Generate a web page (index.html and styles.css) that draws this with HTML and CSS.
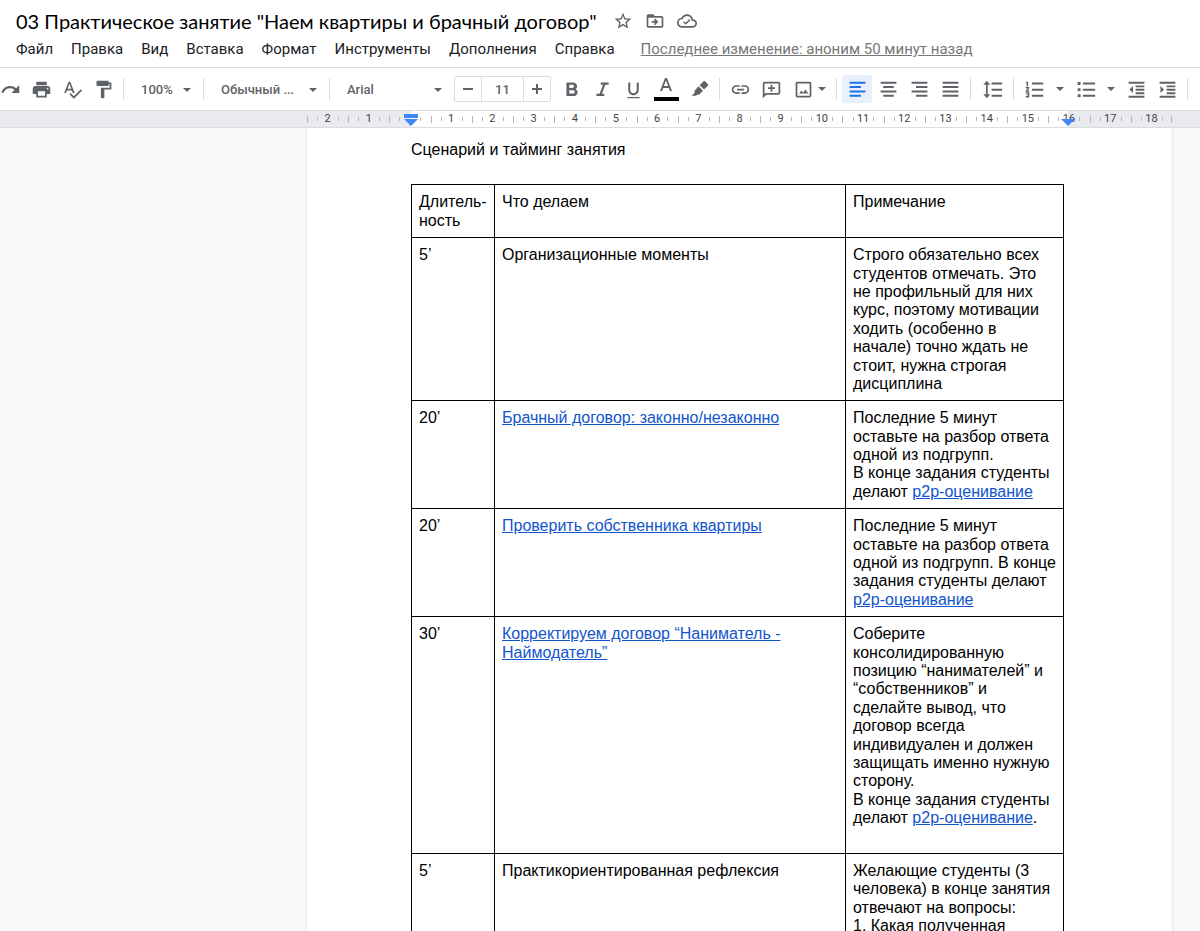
FILE: index.html
```html
<!DOCTYPE html>
<html lang="ru">
<head>
<meta charset="utf-8">
<meta name="viewport" content="width=device-width, initial-scale=1">
<title>03 Практическое занятие "Наем квартиры и брачный договор"</title>
<link rel="stylesheet" href="styles.css">
</head>
<body>
<header class="header">
  <div class="title-row">
    <h1 class="doc-title">03 Практическое занятие "Наем квартиры и брачный договор"</h1>
    <button class="title-btn" type="button" aria-label="Пометить"><svg class="icon-sm" viewBox="0 0 24 24"><path d="M22 9.24l-7.19-.62L12 2 9.19 8.63 2 9.24l5.46 4.73L5.82 21 12 17.27 18.18 21l-1.63-7.03L22 9.24zM12 15.4l-3.76 2.27 1-4.28-3.32-2.88 4.38-.38L12 6.1l1.71 4.04 4.38.38-3.32 2.88 1 4.28L12 15.4z"/></svg></button>
    <button class="title-btn" type="button" aria-label="Переместить"><svg class="icon-sm" viewBox="0 0 24 24"><path d="M20 6h-8l-2-2H4c-1.100 0-2 .9-2 2v12c0 1.100.9 2 2 2h16c1.100 0 2-.9 2-2V8c0-1.100-.9-2-2-2zm0 12H4V8h16v10z"/><path d="M8 12h4.200l-1.600-1.600L12 9l4 4-4 4-1.400-1.400 1.600-1.600H8z"/></svg></button>
    <button class="title-btn" type="button" aria-label="Статус документа"><svg class="icon-sm" viewBox="0 0 24 24"><path d="M19.350 10.040C18.670 6.590 15.640 4 12 4 9.110 4 6.600 5.640 5.350 8.040 2.340 8.360 0 10.910 0 14c0 3.310 2.690 6 6 6h13c2.760 0 5-2.240 5-5 0-2.640-2.050-4.780-4.650-4.960zM19 18H6c-2.210 0-4-1.790-4-4 0-2.050 1.530-3.760 3.560-3.970l1.070-.11.5-.95C8.080 7.140 9.940 6 12 6c2.620 0 4.880 1.860 5.390 4.430l.3 1.500 1.530.11c1.560.1 2.780 1.410 2.780 2.960 0 1.650-1.350 3-3 3z"/><path d="M10.500 16.600l-3.100-3.100 1.300-1.300 1.800 1.800 4.300-4.300 1.300 1.300z"/></svg></button>
  </div>
  <nav class="menu">
    <button class="menu-item" type="button">Файл</button>
    <button class="menu-item" type="button">Правка</button>
    <button class="menu-item" type="button">Вид</button>
    <button class="menu-item" type="button">Вставка</button>
    <button class="menu-item" type="button">Формат</button>
    <button class="menu-item" type="button">Инструменты</button>
    <button class="menu-item" type="button">Дополнения</button>
    <button class="menu-item" type="button">Справка</button>
    <a class="last-edit" href="#history">Последнее изменение: аноним 50 минут назад</a>
  </nav>
</header>

<div class="toolbar" role="toolbar" aria-label="Форматирование">
  <button class="tool" type="button" aria-label="Повторить"><svg class="icon" viewBox="0 0 24 24"><path d="M18.400 10.600C16.550 8.990 14.150 8 11.500 8c-4.650 0-8.580 3.030-9.960 7.220L3.900 16c1.050-3.190 4.050-5.500 7.600-5.500 1.950 0 3.730.72 5.120 1.880L13 16h9V7l-3.600 3.600z"/></svg></button>
  <button class="tool" type="button" aria-label="Печать"><svg class="icon" viewBox="0 0 24 24"><path d="M19 8H5c-1.660 0-3 1.340-3 3v6h4v4h12v-4h4v-6c0-1.660-1.340-3-3-3zm-3 11H8v-5h8v5zm3-7c-.55 0-1-.45-1-1s.45-1 1-1 1 .45 1 1-.45 1-1 1zm-1-9H6v4h12V3z"/></svg></button>
  <button class="tool" type="button" aria-label="Правописание"><svg class="icon" viewBox="0 0 24 24"><path d="M12.450 16h2.090L9.430 3H7.570L2.460 16h2.090l1.120-3h5.640l1.140 3zm-6.020-5L8.500 5.480 10.570 11H6.430zm15.160.59l-8.090 8.090L9.830 16l-1.410 1.410 5.090 5.090L23 13l-1.410-1.410z"/></svg></button>
  <button class="tool" type="button" aria-label="Копировать форматирование"><svg class="icon" viewBox="0 0 24 24"><path d="M18 4V3c0-.55-.45-1-1-1H5c-.55 0-1 .45-1 1v4c0 .55.45 1 1 1h12c.55 0 1-.45 1-1V6h1v4H9v11c0 .55.45 1 1 1h2c.55 0 1-.45 1-1v-9h8V4h-3z"/></svg></button>
  <span class="sep"></span>
  <span class="picker picker-zoom"><select class="picker-select" aria-label="Масштаб"><option>100%</option></select></span>
  <span class="sep"></span>
  <span class="picker picker-style"><select class="picker-select" aria-label="Стили"><option>Обычный ...</option></select></span>
  <span class="sep"></span>
  <span class="picker picker-font"><select class="picker-select" aria-label="Шрифт"><option>Arial</option></select></span>
  <span class="size-box">
    <button class="size-btn" type="button" aria-label="Уменьшить"><svg class="icon-xs" viewBox="0 0 12 12"><path d="M1 5h10v2H1z"/></svg></button>
    <input class="size-input" type="text" value="11" aria-label="Размер шрифта">
    <button class="size-btn" type="button" aria-label="Увеличить"><svg class="icon-xs" viewBox="0 0 12 12"><path d="M5 1h2v4h4v2H7v4H5V7H1V5h4z"/></svg></button>
  </span>
  <button class="tool" type="button" aria-label="Полужирный"><svg class="icon" viewBox="0 0 24 24"><path d="M16.500 11.700c1.100-.8 1.900-2 1.900-3.200C18.400 5.700 16.300 4 13.500 4H6.200v15.500h8.100c2.700 0 4.700-2 4.700-4.500 0-1.500-1-2.700-2.500-3.300zM9.500 6.700h3.600c1 0 1.800.8 1.800 1.700s-.8 1.800-1.800 1.800H9.500zm4.300 10H9.500v-3.800h4.300c1 0 1.800.9 1.800 1.900s-.8 1.900-1.800 1.900z"/></svg></button>
  <button class="tool" type="button" aria-label="Курсив"><svg class="icon" viewBox="0 0 24 24"><path d="M10 4v2.600h2.600l-4 10.300H5v2.600h9v-2.600h-2.700l4-10.300H19V4z"/></svg></button>
  <button class="tool" type="button" aria-label="Подчеркнутый"><svg class="icon" viewBox="0 0 24 24"><path d="M12 18.500c3.310 0 6-2.690 6-6V4h-2.300v8.500c0 2.100-1.600 3.700-3.700 3.700s-3.700-1.600-3.700-3.700V4H6v8.500c0 3.310 2.690 6 6 6zM5 20.500V22h14v-1.500z"/></svg></button>
  <button class="tool tool-color" type="button" aria-label="Цвет текста"><svg class="icon-color" viewBox="0 0 26 26"><path d="M12 2L7 15h2.100l1.100-3h5.600l1.100 3H19L14 2zm-1.100 8.100L13 4.500l2.100 5.600z"/><path class="swatch" d="M1 21h25v4H1z"/></svg></button>
  <button class="tool" type="button" aria-label="Цвет выделения"><svg class="icon" viewBox="0 0 24 24"><path d="M16.600 2.700c.5-.5 1.300-.5 1.800 0l3.200 3.200c.5.5.5 1.300 0 1.800l-4.400 4.400-5-5zM11 8.300l5 5-4 4c-.7.7-1.700.9-2.600.5L8 19.200H3l3.500-3.500c-.5-1-.3-2 .4-2.800z"/></svg></button>
  <span class="sep"></span>
  <button class="tool" type="button" aria-label="Ссылка"><svg class="icon" viewBox="0 0 24 24"><path d="M3.900 12c0-1.710 1.390-3.100 3.100-3.100h4V7H7c-2.760 0-5 2.240-5 5s2.240 5 5 5h4v-1.900H7c-1.710 0-3.100-1.390-3.100-3.100zM8 13h8v-2H8v2zm9-6h-4v1.900h4c1.710 0 3.100 1.390 3.100 3.100s-1.390 3.100-3.100 3.100h-4V17h4c2.760 0 5-2.240 5-5s-2.240-5-5-5z"/></svg></button>
  <button class="tool" type="button" aria-label="Комментарий"><svg class="icon" viewBox="0 0 24 24"><path d="M20 3H4c-1.100 0-2 .9-2 2v17l4-4h14c1.100 0 2-.9 2-2V5c0-1.100-.9-2-2-2zm0 13H5.200L4 17.200V5h16z"/><path d="M11 6.500h2v3h3v2h-3v3h-2v-3H8v-2h3z"/></svg></button>
  <button class="tool tool-image" type="button" aria-label="Изображение"><svg class="icon" viewBox="0 0 24 24"><path d="M19 5v14H5V5h14m0-2H5c-1.100 0-2 .9-2 2v14c0 1.100.9 2 2 2h14c1.100 0 2-.9 2-2V5c0-1.100-.9-2-2-2z"/><path d="M14.200 12l-2.700 3.600-2-2.400L7 16.500h10.500z"/></svg><span class="caret"></span></button>
  <span class="sep"></span>
  <button class="tool tool-active" type="button" aria-label="По левому краю" aria-pressed="true"><svg class="icon" viewBox="0 0 24 24"><path d="M3 3h18v2.300H3zM3 8h13v2.300H3zM3 13h18v2.300H3zM3 18h13v2.300H3z"/></svg></button>
  <button class="tool" type="button" aria-label="По центру"><svg class="icon" viewBox="0 0 24 24"><path d="M3 3h18v2.300H3zM6 8h12v2.300H6zM3 13h18v2.300H3zM6 18h12v2.300H6z"/></svg></button>
  <button class="tool" type="button" aria-label="По правому краю"><svg class="icon" viewBox="0 0 24 24"><path d="M3 3h18v2.300H3zM8 8h13v2.300H8zM3 13h18v2.300H3zM8 18h13v2.300H8z"/></svg></button>
  <button class="tool" type="button" aria-label="По ширине"><svg class="icon" viewBox="0 0 24 24"><path d="M3 3h18v2.300H3zM3 8h18v2.300H3zM3 13h18v2.300H3zM3 18h18v2.300H3z"/></svg></button>
  <span class="sep"></span>
  <button class="tool tool-wide" type="button" aria-label="Интервал"><svg class="icon" viewBox="0 0 24 24"><path d="M5.500 2L1.500 6.500h3v11h-3l4 4.500 4-4.500h-3v-11h3zM11 4h12v2.300H11zM11 11h12v2.300H11zM11 18h12v2.300H11z"/></svg></button>
  <span class="sep"></span>
  <button class="tool" type="button" aria-label="Нумерованный список"><svg class="icon" viewBox="0 0 24 24"><path d="M2 16.500h2.400v.8H3v1.400h1.400v.8H2V21h4v-6H2zM3 8.500h1.600V3H2v1.400h1zM2 10.500h2.300L2 13.200v1.300h4V13H4.200L6 10.800V9H2zM9 4v2.300h13V4zM9 18v2.300h13V18zM9 11v2.300h13V11z"/></svg></button>
  <button class="tool tool-narrow" type="button" aria-label="Варианты нумерации"><span class="caret"></span></button>
  <button class="tool" type="button" aria-label="Маркированный список"><svg class="icon" viewBox="0 0 24 24"><path d="M3 3.500h3.300v3.300H3zM3 10.500h3.300v3.300H3zM3 17.500h3.300v3.300H3zM9 4h14v2.300H9zM9 11h14v2.300H9zM9 18h14v2.300H9z"/></svg></button>
  <button class="tool tool-narrow" type="button" aria-label="Варианты маркеров"><span class="caret"></span></button>
  <button class="tool" type="button" aria-label="Уменьшить отступ"><svg class="icon" viewBox="0 0 24 24"><path d="M3 3h18v2.300H3zM11 7.300h10v2.200H11zM11 11.200h10v2.200H11zM11 15.200h10v2.200H11zM3 19h18v2.300H3zM8 8v8l-4-4z"/></svg></button>
  <button class="tool" type="button" aria-label="Увеличить отступ"><svg class="icon" viewBox="0 0 24 24"><path d="M3 3h18v2.300H3zM11 7.300h10v2.200H11zM11 11.200h10v2.200H11zM11 15.200h10v2.200H11zM3 19h18v2.300H3zM4 8v8l4-4z"/></svg></button>
  <span class="sep"></span>
</div>

<div class="ruler">
  <div class="ruler-track">
    <span class="cm">2</span><span class="cm">1</span><span class="cm"></span><span class="cm">1</span><span class="cm">2</span><span class="cm">3</span><span class="cm">4</span><span class="cm">5</span><span class="cm">6</span><span class="cm">7</span><span class="cm">8</span><span class="cm">9</span><span class="cm">10</span><span class="cm">11</span><span class="cm">12</span><span class="cm">13</span><span class="cm">14</span><span class="cm">15</span><span class="cm">16</span><span class="cm">17</span><span class="cm">18</span>
    <svg class="marker marker-left" viewBox="0 0 14 12"><path d="M0 0h14v4H0zM0 5h14l-7 7z"/></svg>
    <svg class="marker marker-right" viewBox="0 0 14 12"><path d="M0 5h14l-7 7z"/></svg>
  </div>
</div>

<main class="workspace">
  <article class="page">
    <p class="lead">Сценарий и тайминг занятия</p>
    <table class="plan">
      <colgroup><col class="col-time"><col class="col-what"><col class="col-note"></colgroup>
      <thead>
        <tr><th scope="col">Длитель-<br>ность</th><th scope="col">Что делаем</th><th scope="col">Примечание</th></tr>
      </thead>
      <tbody>
        <tr><td>5’</td><td>Организационные моменты</td><td>Строго обязательно всех студентов отмечать. Это не профильный для них курс, поэтому мотивации ходить (особенно в начале) точно ждать не стоит, нужна строгая дисциплина</td></tr>
        <tr><td>20’</td><td><a href="#contract">Брачный договор: законно/незаконно</a></td><td>Последние 5 минут оставьте на разбор ответа одной из подгрупп.<br>В конце задания студенты делают <a href="#p2p">p2p-оценивание</a></td></tr>
        <tr><td>20’</td><td><a href="#owner">Проверить собственника квартиры</a></td><td>Последние 5 минут оставьте на разбор ответа одной из подгрупп. В конце задания студенты делают <a href="#p2p">p2p-оценивание</a></td></tr>
        <tr><td>30’</td><td><a href="#rent">Корректируем договор “Наниматель - Наймодатель”</a></td><td>Соберите консолидированную позицию “нанимателей” и “собственников” и сделайте вывод, что договор всегда индивидуален и должен защищать именно нужную сторону.<br>В конце задания студенты делают <a href="#p2p">p2p-оценивание</a>.<br><br></td></tr>
        <tr><td>5’</td><td>Практикориентированная рефлексия</td><td>Желающие студенты (3 человека) в конце занятия отвечают на вопросы:<br>1. Какая полученная</td></tr>
      </tbody>
    </table>
  </article>
</main>
</body>
</html>
```
FILE: styles.css
```css
* { box-sizing: border-box; }

html, body { height: 100%; }

body {
  margin: 0;
  display: flex;
  flex-direction: column;
  overflow: hidden;
  background: #fff;
  color: #000;
  font-family: Roboto, "Liberation Sans", sans-serif;
}

button, select, input {
  margin: 0;
  padding: 0;
  border: 0;
  background: none;
  font: inherit;
  color: inherit;
}

svg { display: block; fill: currentColor; }

.header {
  flex: none;
  padding: 8px 16px 3px;
  border-bottom: 1px solid #dadce0;
}

.title-row {
  display: flex;
  align-items: center;
  height: 26px;
  gap: 12px;
  color: #5f6368;
}

.doc-title {
  margin: 0 4px 0 0;
  font-family: Lato, Roboto, sans-serif;
  font-size: 20px;
  font-weight: 400;
  line-height: 26px;
  color: #000;
  white-space: nowrap;
}

.title-btn { width: 20px; }
.icon-sm { width: 20px; height: 20px; }

.menu {
  display: flex;
  align-items: center;
  gap: 18px;
  height: 30px;
  font-size: 15px;
  color: #202124;
  white-space: nowrap;
}

.last-edit { margin-left: 8px; color: #777; }

.toolbar {
  flex: none;
  display: flex;
  align-items: center;
  gap: 1px;
  height: 42px;
  margin-left: -5px;
  color: #5f6368;
}

.tool {
  flex: none;
  display: flex;
  align-items: center;
  justify-content: center;
  width: 30px;
  height: 28px;
  border-radius: 2px;
}

.tool-active { background: #e8f0fe; color: #1a73e8; }
.tool-color { width: 34px; }
.tool-wide { width: 32px; }
.tool-narrow { width: 19px; }
.tool-image { width: 44px; gap: 4px; }

.icon { width: 21px; height: 21px; }
.icon-color { width: 26px; height: 26px; }
.icon-xs { width: 12px; height: 12px; }
.swatch { fill: #000; }

.sep {
  flex: none;
  width: 1px;
  height: 22px;
  margin: 0 4px;
  background: #dadce0;
}

.caret, .picker::after {
  border: 4px solid transparent;
  border-top-color: #5f6368;
  border-bottom: 0;
}

.picker {
  flex: none;
  position: relative;
  height: 28px;
  font-size: 13px;
  font-weight: 500;
}

.picker::after {
  content: "";
  position: absolute;
  top: 13px;
  right: 7px;
  pointer-events: none;
}

.picker-zoom { width: 69px; }
.picker-style { width: 115px; }
.picker-font { width: 114px; }

.picker-select {
  width: 100%;
  height: 100%;
  padding-left: 12px;
  appearance: none;
}

.size-box {
  flex: none;
  display: flex;
  width: 97px;
  height: 26px;
  margin: 0 4px;
  border: 1px solid #dadce0;
  border-radius: 2px;
}

.size-btn {
  display: flex;
  align-items: center;
  justify-content: center;
  width: 26px;
}

.size-input {
  flex: 1;
  min-width: 0;
  border: 1px solid #dadce0;
  border-width: 0 1px;
  text-align: center;
  font-size: 13px;
  font-weight: 500;
}

.ruler {
  flex: none;
  padding: 0 28px 0 307px;
  border: 1px solid #dadce0;
  border-width: 1px 0;
  background: #e8eaed;
}

.ruler-track {
  position: relative;
  display: grid;
  grid-template-columns: repeat(21, 1fr);
  height: 16px;
  background:
    linear-gradient(#b4b7bb, #b4b7bb) 100% 50% / 1px 7px no-repeat,
    linear-gradient(#fff, #fff) 104px 0 / calc(100% - 208px) 100% no-repeat;
}

.cm {
  background:
    linear-gradient(#b4b7bb, #b4b7bb) 0 50% / 1px 7px no-repeat,
    linear-gradient(#b4b7bb, #b4b7bb) 25% 50% / 1px 4px no-repeat,
    linear-gradient(#b4b7bb, #b4b7bb) 77% 50% / 1px 4px no-repeat;
  font-size: 11px;
  line-height: 16px;
  text-align: center;
  color: #444;
}

.marker {
  position: absolute;
  top: 3px;
  width: 14px;
  height: 12px;
  fill: #4285f4;
}

.marker-left { left: 97px; }
.marker-right { right: 97px; }

.workspace {
  flex: 1;
  min-height: 0;
  overflow: hidden;
  padding: 0 28px 0 307px;
  background: #f8f9fa;
}

.page {
  min-height: 100%;
  padding: 13px 108px 0 104px;
  background: #fff;
  box-shadow: 0 0 2px 1px #e4e6e9;
  font-family: "Liberation Sans", Arial, sans-serif;
  font-size: 16px;
  line-height: 1.15;
}

.lead { margin: 0 0 25px; }

.plan {
  width: 100%;
  border-collapse: collapse;
  table-layout: fixed;
}

.col-time { width: 83px; }
.col-note { width: 218px; }

.plan th, .plan td {
  padding: 8px 7px 7px;
  border: 1px solid #000;
  font-weight: 400;
  text-align: left;
  vertical-align: top;
}

.plan a { color: #1155cc; }
```
